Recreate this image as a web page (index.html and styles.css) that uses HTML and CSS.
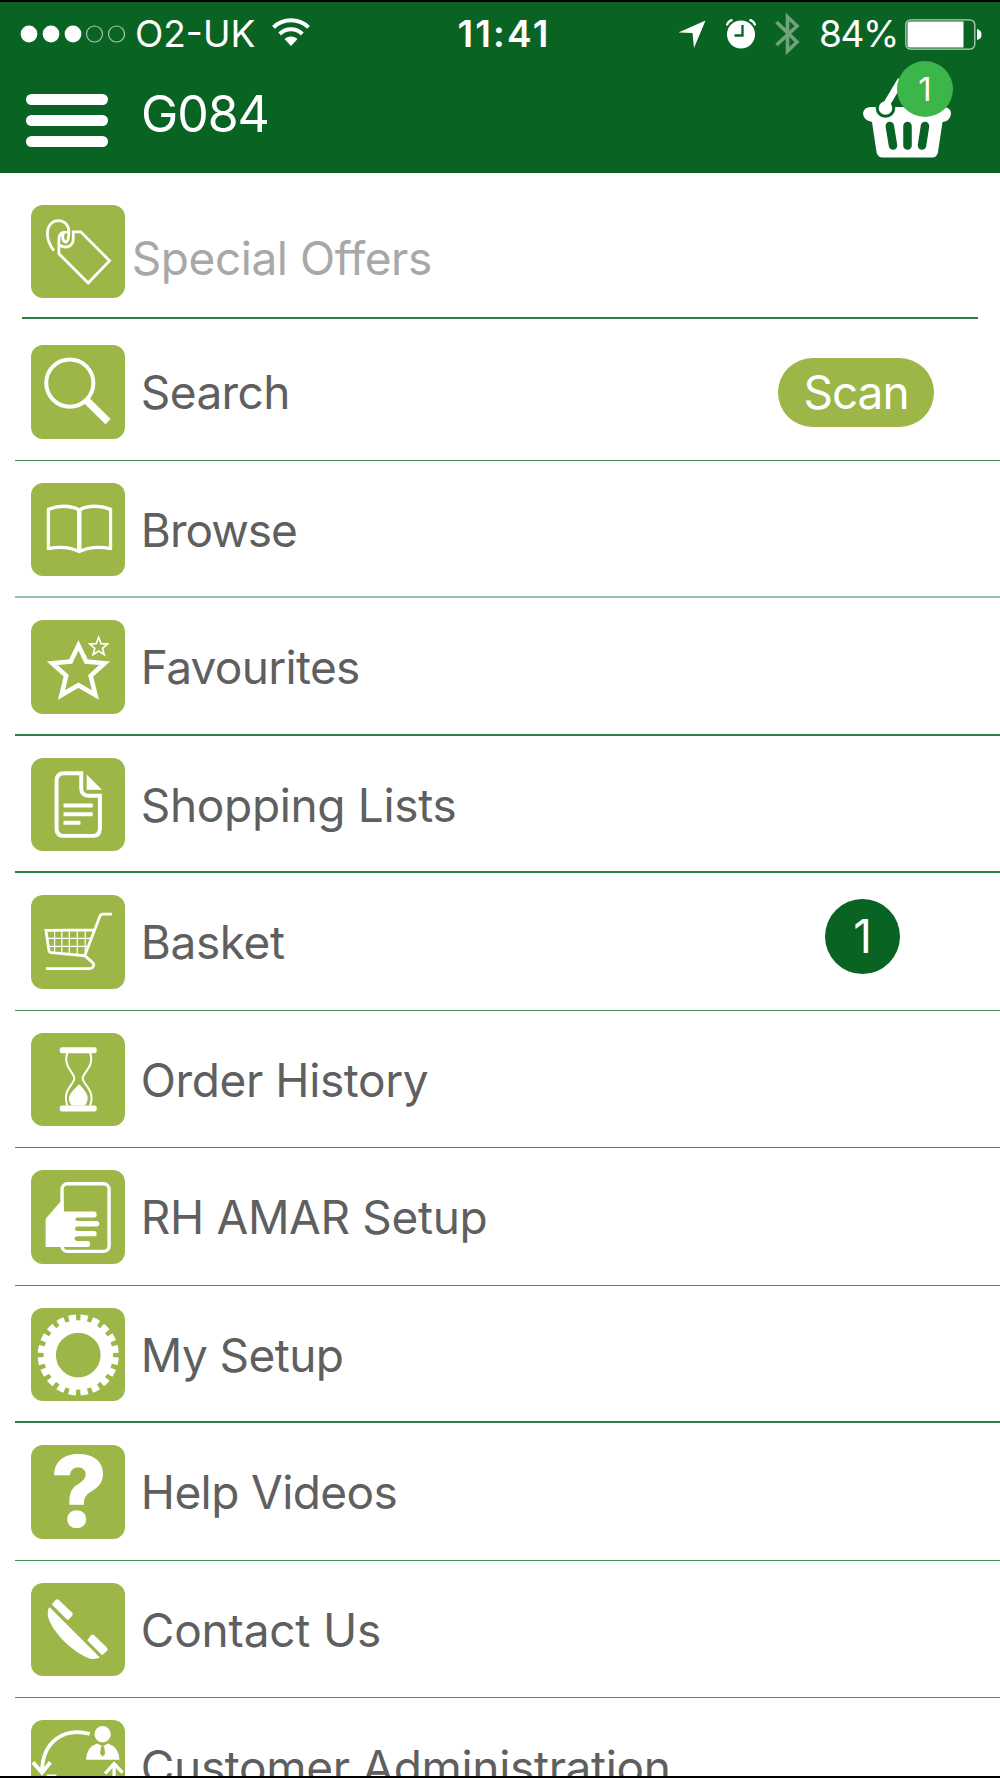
FILE: index.html
```
<!DOCTYPE html>
<html lang="en">
<head>
<meta charset="utf-8">
<title>G084</title>
<link rel="stylesheet" href="styles.css">
</head>
<body>
  <div class="screen">
    <header>
      <div class="status-bar">
        <div class="status-left">
          <svg class="signal" width="105" height="18" viewBox="0 0 105 18">
            <g fill="#fff"><circle cx="9" cy="9" r="8.4"/><circle cx="31" cy="9" r="8.4"/><circle cx="53" cy="9" r="8.4"/></g>
            <g fill="none" stroke="#a5c5ae" stroke-width="1.2"><circle cx="74.5" cy="9" r="8"/><circle cx="96.5" cy="9" r="8"/></g>
          </svg>
          <span class="carrier">O2-UK</span>
          <svg class="wifi" width="40" height="30" viewBox="0 0 40 30">
            <g fill="none" stroke="#fff" stroke-width="4">
              <path d="M2.500 9.300C12 -.2 28 -.2 37.500 9.300"/>
              <path d="M8.700 16C15 9.800 25 9.800 31.300 16"/>
            </g>
            <path d="M13.500 21C17.500 17.700 22.500 17.700 26.500 21L20 28z" fill="#fff"/>
          </svg>
        </div>
        <div class="clock">11:41</div>
        <div class="status-right">
          <svg class="location" width="28" height="28" viewBox="0 0 28 28"><path d="M27.500 .5L16 28L14.500 13L.5 12.500z" fill="#fff"/></svg>
          <svg class="alarm" width="30" height="30" viewBox="0 0 30 30">
            <circle cx="15" cy="15.500" r="14" fill="#fff"/>
            <path d="M.8 6.500Q2 2 6.500 .8M29.200 6.500Q28 2 23.500 .8" fill="none" stroke="#fff" stroke-width="2.500"/>
            <path d="M16.500 6V16.500H8.500" fill="none" stroke="#096424" stroke-width="2.300"/>
          </svg>
          <svg class="bluetooth" width="25" height="44" viewBox="0 0 25 44"><path d="M1.500 10L22 30L12.500 39V5L22 14L1.500 33" fill="none" stroke="#6fa27d" stroke-width="3.600"/></svg>
          <span class="percent">84%</span>
          <svg class="battery" width="77" height="31" viewBox="0 0 77 31">
            <rect x=".8" y=".8" width="69" height="29.400" rx="5" fill="none" stroke="#b5d0bc" stroke-width="1.300"/>
            <path d="M5 2.500H58.500V28.500H5Q2.500 28.500 2.500 26V5Q2.500 2.500 5 2.500zM72 10Q76.500 11 76.500 15.500T72 21z" fill="#fff"/>
          </svg>
        </div>
      </div>
      <div class="nav-bar">
        <div class="menu-button"><span></span><span></span><span></span></div>
        <div class="title">G084</div>
        <div class="mini-basket">
          <svg width="88" height="82" viewBox="0 0 88 82">
            <path d="M0 37Q1 31 8 31H80Q88 31 88 38Q87 45 79.500 46L75 76Q74 81.500 69 81.500H20Q14.500 81.500 13.500 76L9 46Q0 44 0 37z" fill="#fff"/>
            <circle cx="22.500" cy="32" r="8.300" fill="#fff" stroke="#096424" stroke-width="3"/>
            <path d="M22.500 30L38 4" stroke="#fff" stroke-width="7"/>
            <path d="M26.800 50L30 69.500M44.500 50V69.500M62 50L59 69.500" stroke="#096424" stroke-width="8.500" stroke-linecap="round"/>
          </svg>
          <span class="count">1</span>
        </div>
      </div>
    </header>

    <div class="special">
      <svg class="icon" viewBox="0 0 94 94">
        <path d="M23 46C18.500 40 16.500 34 16.500 29C16.500 11 38 12 38 27C38 32 37 37 35 37.500C31 36 31 29 34 27.500C29 27 28 32 28 36V49L57.500 78.500L79 56L50 27H42.500V34C42.500 42 35 44 29 40.500" stroke-width="2.800"/>
      </svg>
      <span>Special Offers</span>
    </div>

    <ul class="menu">
      <li>
        <svg class="icon" viewBox="0 0 94 94">
          <circle cx="39" cy="38.300" r="23.700" stroke-width="4"/>
          <path d="M55 55L77.500 77" stroke-width="7.500"/>
        </svg>
        <span class="label search">Search</span>
        <button class="scan">Scan</button>
      </li>
      <li class="pale">
        <svg class="icon" viewBox="0 0 94 94">
          <path d="M17.500 26.500Q34 20 48.500 27Q63 20 80 26.500V66Q62 62.500 48.500 69Q35 62.500 17.500 66z" stroke-width="3.300" stroke-linejoin="round"/>
          <path d="M48.500 27V69" stroke-width="4.500"/>
        </svg>
        <span class="label browse">Browse</span>
      </li>
      <li class="strong">
        <svg class="icon" viewBox="0 0 94 94">
          <path d="M47.700 25.500L55.500 41.800L74 43.500L60 56L64.800 75.500L47.700 65.500L30.600 75.500L35.400 56L21.400 43.500L39.900 41.800z" stroke-width="4.600"/>
          <path d="M68 17.500L70.400 23.800L77 24.200L71.900 28.400L73.600 34.800L68 31.200L62.400 34.800L64.100 28.400L59 24.200L65.600 23.800z" stroke-width="1.700"/>
        </svg>
        <span class="label favourites">Favourites</span>
      </li>
      <li class="strong">
        <svg class="icon" viewBox="0 0 94 94">
          <path d="M50.500 15.300H33.500Q25.700 15.300 25.700 23V70.500Q25.700 78.300 33.500 78.300H61.500Q69.300 78.300 69.300 70.500V38H58Q50.500 38 50.500 30.500z" stroke-width="4"/>
          <path class="solid" d="M56 16.500L71.300 32H56z"/>
          <path d="M32.700 47.700H62M32.700 56.500H62M32.700 65H49.700" stroke-width="4"/>
        </svg>
        <span class="label lists">Shopping Lists</span>
      </li>
      <li>
        <svg class="icon" viewBox="0 0 94 94">
          <path d="M81.300 19.300H72Q70 19.300 69 22L54 61L20.500 58Q18.500 58 18 56L15 35.500L63.500 35" stroke-width="2.800"/>
          <path d="M54 61L61.500 67.500C65 70.500 62 74 59.500 74H15" stroke-width="2.800"/>
          <path d="M23.700 36V58M31 36V59M38.500 36V60M46.500 36V60M54.500 36V59M16 43.700H60M17 51.700H57" stroke-width="1.200"/>
        </svg>
        <span class="label basket">Basket</span>
        <span class="badge">1</span>
      </li>
      <li>
        <svg class="icon" viewBox="0 0 94 94">
          <rect class="solid" x="29" y="14.300" width="37" height="6" rx="2"/>
          <rect class="solid" x="29" y="73" width="37" height="6" rx="2"/>
          <path d="M36.500 20C32 34 43.500 40 43.500 45.500C43.500 52 31 57 36.500 73M59.500 20C64 34 52 40 52 45.500C52 52 65 57 59.500 73" stroke-width="2"/>
          <path class="solid" d="M48.500 51.500Q57 60 57 65Q57 70 54 73H41Q38 70 38 65Q39 60 48.500 51.500z"/>
        </svg>
        <span class="label history">Order History</span>
      </li>
      <li>
        <svg class="icon" viewBox="0 0 94 94">
          <rect x="31.200" y="13.800" width="47.300" height="68" rx="5.500" stroke-width="3.400"/>
          <path class="solid" d="M30 31.300L14.700 49V77.300H57Q59.500 77.300 59.500 74.300T57 71.300H46.500Q43.700 71 43.700 69T46.500 66.700H63.500Q66 66.700 66 64T63.500 61.300H46.500Q44 61 44 59T46.500 56.700H66Q68.700 56.700 68.700 54T66 51.300H47Q44.500 51 44.500 49.500T47 47.700H63.500Q66 47.700 66 44.700T63.500 41.700H32.800V31z"/>
        </svg>
        <span class="label rh">RH AMAR Setup</span>
      </li>
      <li class="strong">
        <svg class="icon" viewBox="0 0 94 94">
          <circle cx="47.500" cy="47.300" r="28.700" stroke-width="12.500"/>
          <circle cx="47.500" cy="47.300" r="37.500" stroke-width="6.500" pathLength="200" stroke-dasharray="6.200 3.800" stroke-dashoffset="-1.900"/>
        </svg>
        <span class="label setup">My Setup</span>
      </li>
      <li>
        <svg class="icon" viewBox="0 0 94 94"><text x="48.200" y="82.800" text-anchor="middle">?</text></svg>
        <span class="label help">Help Videos</span>
      </li>
      <li>
        <svg class="icon" viewBox="0 0 94 94">
          <g class="solid">
            <path d="M24.500 17Q26.300 15.500 28 17L41.500 30Q42.500 31.500 41.500 33L37 37.500L21 21.500z"/>
            <path d="M18.700 24.300L69.300 75Q66 77 60 76.300C42 71 14 43 17 28Q17.300 25 18.700 24.300z"/>
            <path d="M60.500 52.500Q62 51.300 63.500 52.500L76.500 65Q77.700 66.500 76.500 68L71.500 72.700L56.500 57.500z"/>
          </g>
        </svg>
        <span class="label contact">Contact Us</span>
      </li>
      <li>
        <svg class="icon" viewBox="0 0 94 94">
          <path d="M59 14C34 7 11 21 11 53M2 42.500L11 53L19.500 42.500" stroke-width="3.800"/>
          <path d="M83.500 90V44M74.500 54L83.500 44L92 53M16 56.500H25.500" stroke-width="3.300"/>
          <g class="solid">
            <circle cx="72" cy="14.300" r="8.200"/>
            <path d="M55.400 40Q55.500 27 66.500 23.500L72 26.500L77.500 23.500Q88.500 27 89 40z"/>
          </g>
          <path class="tie" d="M70.500 26.500H73.500L74.500 34L72 37L69.500 34z"/>
        </svg>
        <span class="label admin">Customer Administration</span>
      </li>
    </ul>
  </div>
</body>
</html>
```
FILE: styles.css
```
* {
  box-sizing: border-box;
}

body {
  margin: 0;
  background-color: #fff;
  font-family: Inter, "Liberation Sans", sans-serif;
  color: #5f5f5f;
}

.screen {
  width: 1000px;
  height: 1778px;
  overflow: hidden;
  border-top: 2px solid #000;
  border-bottom: 2px solid #000;
}

header {
  height: 171px;
  background-color: #096424;
  color: #fff;
}

/* Status bar */
.status-bar {
  display: grid;
  grid-template-columns: 1fr auto 1fr;
  align-items: center;
  height: 64px;
  padding: 0 18px 0 20px;
  font-size: 37px;
  line-height: 64px;
}

.status-left,
.status-right {
  display: flex;
  align-items: center;
}

.status-right {
  justify-content: flex-end;
}

.carrier {
  margin-left: 10px;
  width: 122px;
  font-weight: 400;
  letter-spacing: 0;
}

.wifi {
  margin-left: 14px;
  margin-bottom: 2px;
}

.clock {
  margin-left: 2px;
  margin-right: -4px;
  font-weight: 600;
  letter-spacing: 2.2px;
}

.alarm {
  margin-left: 20px;
}

.bluetooth {
  margin-left: 19px;
}

.percent {
  margin-left: 19px;
  width: 80px;
  font-weight: 400;
  letter-spacing: -1.4px;
}

.battery {
  margin-left: 6px;
}

/* Title bar */
.nav-bar {
  display: flex;
  height: 107px;
  padding-left: 26px;
}

.menu-button {
  display: flex;
  flex-direction: column;
  gap: 10px;
  padding-top: 28px;
  width: 82px;
}

.menu-button span {
  height: 11px;
  border-radius: 6px;
  background-color: #fff;
}

.title {
  margin-left: 33px;
  font-size: 50px;
  line-height: 97px;
  letter-spacing: -1.1px;
}

.mini-basket {
  position: relative;
  margin: 10px 49px 0 auto;
}

.count {
  position: absolute;
  top: -15px;
  left: 34px;
  width: 56px;
  height: 56px;
  border-radius: 50%;
  background-color: #3cb54a;
  font-size: 33px;
  line-height: 56px;
  text-align: center;
}

/* Green tile icons */
.icon {
  flex: none;
  width: 93.5px;
  height: 93.5px;
  border-radius: 12px;
  background-color: #9cb648;
  fill: none;
  stroke: #fff;
  stroke-miterlimit: 10;
}

.icon .solid {
  fill: #fff;
  stroke: none;
}

.icon .tie {
  fill: #9cb648;
  stroke: none;
}

.icon text {
  fill: #fff;
  stroke: none;
  font-size: 99px;
  font-weight: 780;
}

.special {
  display: flex;
  height: 146px;
  margin: 0 22px;
  padding: 31.5px 0 0 9.300px;
  border-bottom: 2px solid #2b8046;
  color: #a8a8a8;
  font-size: 46px;
}

.special span {
  margin-left: 7px;
  line-height: 106px;
  letter-spacing: -0.45px;
}

.menu {
  margin: 4px 0 0 15px;
  padding: 0;
  list-style: none;
}

.menu li {
  display: flex;
  align-items: center;
  height: 137.5px;
  padding: 1.5px 0 0 16.3px;
  border-bottom: 1px solid #459360;
}

.menu li.strong {
  padding-top: 2.5px;
  border-bottom: 2px solid #2b8046;
}

.menu li.pale {
  padding-top: 2.5px;
  border-bottom: 2px solid #95c2a3;
}

.label {
  margin-left: 16px;
  font-size: 46px;
  white-space: nowrap;
}

/* Tracking per label */
.search,
.setup {
  letter-spacing: -0.6px;
}

.browse {
  letter-spacing: -1px;
}

.favourites {
  letter-spacing: -0.7px;
}

.lists,
.rh,
.admin {
  letter-spacing: -0.34px;
}

.basket,
.history {
  letter-spacing: -0.4px;
}

.help {
  letter-spacing: -0.6px;
}

.contact {
  letter-spacing: -0.2px;
}

.scan {
  width: 156px;
  height: 69px;
  margin: 0 66px 0 auto;
  padding: 0;
  border: none;
  border-radius: 35px;
  background-color: #9cb648;
  color: #fff;
  font-family: inherit;
  font-size: 46px;
  letter-spacing: -1px;
}

.badge {
  width: 75px;
  height: 75px;
  margin: -12px 100px 0 auto;
  border-radius: 50%;
  background-color: #096424;
  color: #fff;
  font-size: 46px;
  line-height: 75px;
  text-align: center;
}
```
